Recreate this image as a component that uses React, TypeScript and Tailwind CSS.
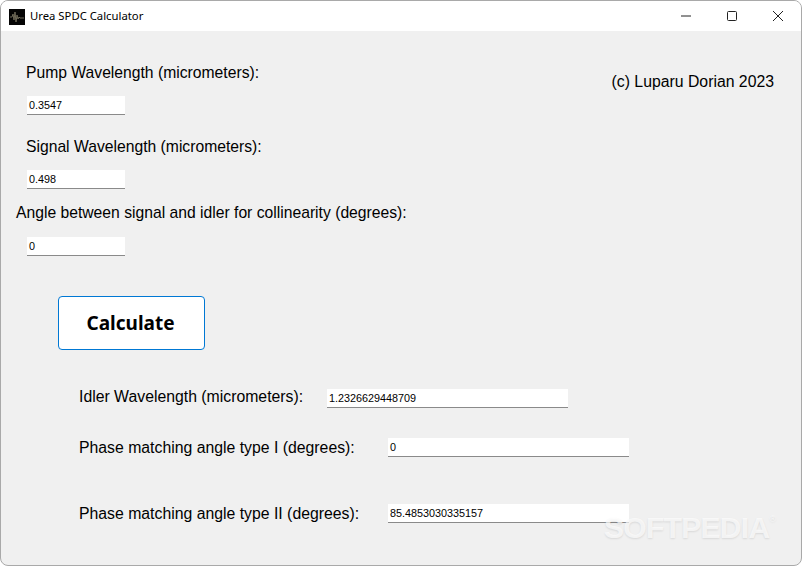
export default function App() {
  const inputCls =
    "h-[19px] bg-white border-b border-[#8a8a8a] pl-[2px] text-[10.8px] leading-[18px] text-black";
  const labelCls = "text-[15.8px] leading-[20px] text-black whitespace-nowrap";
  const topLabelCls = "text-[15.7px] leading-[20px] text-black whitespace-nowrap";

  return (
    <div className="relative w-[802px] h-[566px] bg-white overflow-hidden font-['Liberation_Sans',sans-serif]">
      <div className="flex flex-col w-full h-full rounded-[8px] border border-[#a9a9a9] overflow-hidden bg-[#f0f0f0]">
        {/* title bar */}
        <div className="flex items-center h-[30px] bg-white shrink-0">
          <svg width="16" height="16" viewBox="0 0 16 16" className="ml-[8px] mt-[1px]">
            <rect width="16" height="16" fill="#050505" />
            <path d="M1 8h2l1-3 1 6 1-8 1 10 1-7 1 4 1-2 1 1h4" fill="none" stroke="#6f6a58" strokeWidth="1" />
          </svg>
          <span className="ml-[5px] text-[11.3px] text-black font-['Noto_Sans',sans-serif]">Urea SPDC Calculator</span>
          <div className="ml-auto flex items-center h-full">
            <div className="w-[46px] flex justify-center">
              <svg width="10" height="10" viewBox="0 0 10 10"><path d="M0 5h10" stroke="#222" /></svg>
            </div>
            <div className="w-[46px] flex justify-center">
              <svg width="10" height="10" viewBox="0 0 10 10"><rect x="0.5" y="0.5" width="9" height="9" rx="1" fill="none" stroke="#222" /></svg>
            </div>
            <div className="w-[46px] flex justify-center">
              <svg width="10" height="10" viewBox="0 0 10 10"><path d="M0 0l10 10M10 0L0 10" stroke="#222" /></svg>
            </div>
          </div>
        </div>

        {/* form */}
        <div className="flex flex-col flex-1">
          <div className="flex justify-between">
            <div className="flex flex-col">
              <div className={`${topLabelCls} ml-[25px] mt-[32px]`}>Pump Wavelength (micrometers):</div>
              <div className={`${inputCls} w-[98px] ml-[26px] mt-[13px]`}>0.3547</div>
              <div className={`${topLabelCls} ml-[25px] mt-[22px]`}>Signal Wavelength (micrometers):</div>
              <div className={`${inputCls} w-[98px] ml-[26px] mt-[13px]`}>0.498</div>
              <div className={`${topLabelCls} ml-[15px] mt-[14px]`}>Angle between signal and idler for collinearity (degrees):</div>
              <div className={`${inputCls} w-[98px] ml-[26px] mt-[14px]`}>0</div>
            </div>
            <div className={`${labelCls} mt-[41px] mr-[27px]`}>(c) Luparu Dorian 2023</div>
          </div>

          <button className="flex items-center justify-center w-[147px] h-[54px] ml-[57px] mt-[40px] pr-[2px] bg-white border border-[#0078d4] rounded-[4px] text-[19px] font-bold text-black font-['Noto_Sans',sans-serif]">
            Calculate
          </button>

          <div className="flex items-start ml-[78px] mt-[36px]">
            <div className={`${labelCls} w-[248px] mt-[1px]`}>Idler Wavelength (micrometers):</div>
            <div className={`${inputCls} w-[241px] mt-[3px]`}>1.2326629448709</div>
          </div>
          <div className="flex items-start ml-[78px] mt-[29px]">
            <div className={`${labelCls} w-[309px] mt-[1px]`}>Phase matching angle type I (degrees):</div>
            <div className={`${inputCls} w-[241px] mt-[1px]`}>0</div>
          </div>
          <div className="flex items-start ml-[78px] mt-[45px]">
            <div className={`${labelCls} w-[309px] mt-[1px]`}>Phase matching angle type II (degrees):</div>
            <div className={`${inputCls} w-[241px] mt-[1px]`}>85.4853030335157</div>
          </div>
        </div>
      </div>

      {/* watermark */}
      <div className="absolute left-[604px] top-[511px] flex items-start text-white/70 [text-shadow:0_1px_2px_rgba(0,0,0,0.1)]">
        <span className="text-[30px] leading-[34px] font-bold tracking-[-0.7px]">SOFTPEDIA</span>
        <span className="text-[9px] leading-[12px] mt-[2px]">®</span>
      </div>
    </div>
  );
}
